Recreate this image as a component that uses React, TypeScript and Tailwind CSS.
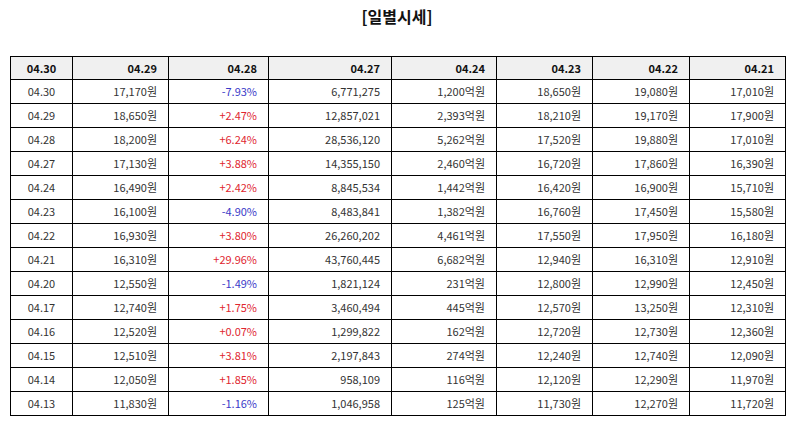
import React from "react";

type Row = [string, string, string, string, string, string, string, string];

const rows: Row[] = [
  ["04.30", "17,170원", "-7.93%", "6,771,275", "1,200억원", "18,650원", "19,080원", "17,010원"],
  ["04.29", "18,650원", "+2.47%", "12,857,021", "2,393억원", "18,210원", "19,170원", "17,900원"],
  ["04.28", "18,200원", "+6.24%", "28,536,120", "5,262억원", "17,520원", "19,880원", "17,010원"],
  ["04.27", "17,130원", "+3.88%", "14,355,150", "2,460억원", "16,720원", "17,860원", "16,390원"],
  ["04.24", "16,490원", "+2.42%", "8,845,534", "1,442억원", "16,420원", "16,900원", "15,710원"],
  ["04.23", "16,100원", "-4.90%", "8,483,841", "1,382억원", "16,760원", "17,450원", "15,580원"],
  ["04.22", "16,930원", "+3.80%", "26,260,202", "4,461억원", "17,550원", "17,950원", "16,180원"],
  ["04.21", "16,310원", "+29.96%", "43,760,445", "6,682억원", "12,940원", "16,310원", "12,910원"],
  ["04.20", "12,550원", "-1.49%", "1,821,124", "231억원", "12,800원", "12,990원", "12,450원"],
  ["04.17", "12,740원", "+1.75%", "3,460,494", "445억원", "12,570원", "13,250원", "12,310원"],
  ["04.16", "12,520원", "+0.07%", "1,299,822", "162억원", "12,720원", "12,730원", "12,360원"],
  ["04.15", "12,510원", "+3.81%", "2,197,843", "274억원", "12,240원", "12,740원", "12,090원"],
  ["04.14", "12,050원", "+1.85%", "958,109", "116억원", "12,120원", "12,290원", "11,970원"],
  ["04.13", "11,830원", "-1.16%", "1,046,958", "125억원", "11,730원", "12,270원", "11,720원"],
];

const headers = ["04.30", "04.29", "04.28", "04.27", "04.24", "04.23", "04.22", "04.21"];
const widths = ["w-[62px]", "w-[96px]", "w-[100px]", "w-[123px]", "w-[105px]", "w-[96px]", "w-[97px]", "w-[96px]"];

export default function App() {
  return (
    <div className="w-[794px] h-[424px] bg-white text-[#333] font-['Noto_Sans_CJK_KR','Noto_Sans',sans-serif] overflow-hidden">
      <div className="pt-[4px] text-center text-[16px] font-bold text-[#111] leading-[24px]">[일별시세]</div>
      <div className="pl-[10px] pt-[28px]">
        <table className="border-collapse table-fixed w-[776px] text-[11px]">
          <colgroup>
            {widths.map((w, i) => (
              <col key={i} className={w} />
            ))}
          </colgroup>
          <thead>
            <tr className="h-[23px] bg-[#f0f0f0]">
              {headers.map((h, i) => (
                <th
                  key={i}
                  className={`border border-black font-bold text-[#111] p-0 ${i === 0 ? "text-center" : "text-right pr-[11px]"}`}
                >
                  {h}
                </th>
              ))}
            </tr>
          </thead>
          <tbody>
            {rows.map((r, ri) => (
              <tr key={ri} className="h-[24px]">
                {r.map((c, ci) => {
                  let color = "";
                  if (ci === 2) color = c.startsWith("-") ? "text-[#3a3ac8]" : "text-[#e0262f]";
                  return (
                    <td
                      key={ci}
                      className={`border border-black p-0 ${ci === 0 ? "text-center" : "text-right pr-[11px]"} ${color}`}
                    >
                      {c}
                    </td>
                  );
                })}
              </tr>
            ))}
          </tbody>
        </table>
      </div>
    </div>
  );
}
